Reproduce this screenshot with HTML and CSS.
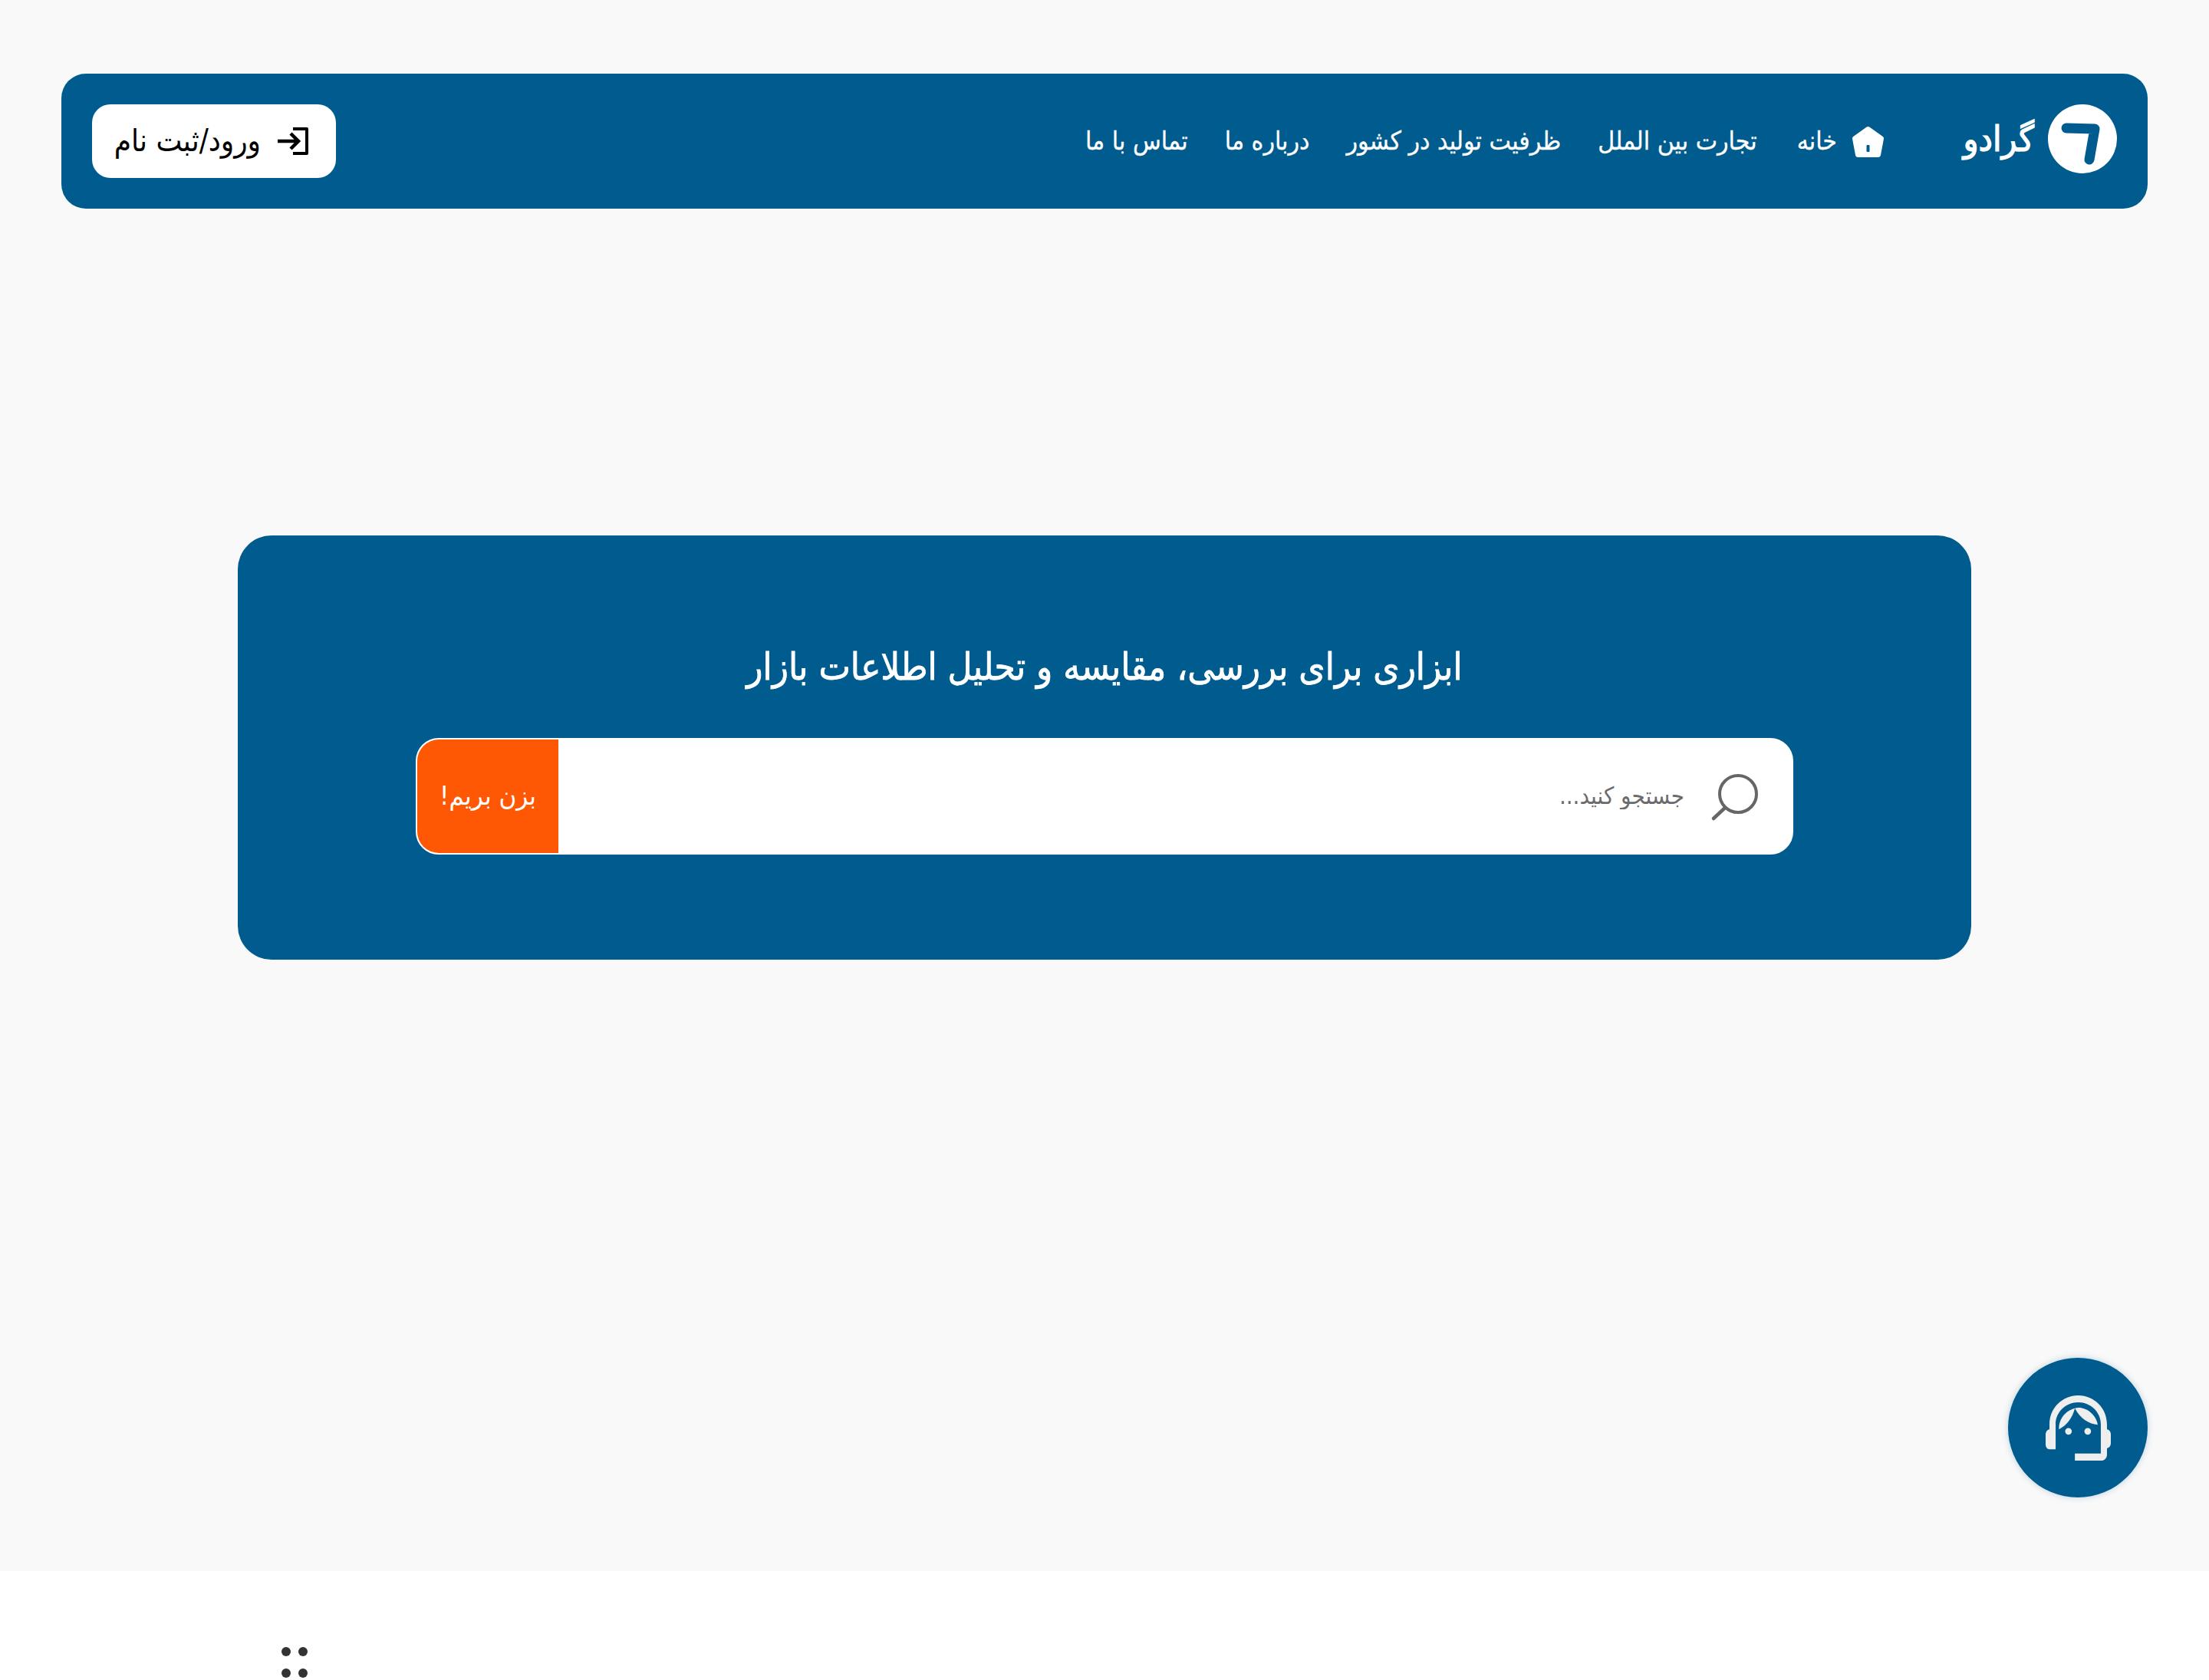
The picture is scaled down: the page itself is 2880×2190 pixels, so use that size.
FILE: index.html
```html
<!DOCTYPE html>
<html lang="fa" dir="rtl">
<head>
    <meta charset="UTF-8">
    <meta name="viewport" content="width=device-width, initial-scale=1.0">
    <title>گرادو</title>
    <link rel="stylesheet" href="styles.css">
</head>
<body>
    <main class="page">
        <header class="navbar">
            <a href="#" class="brand">
                <svg class="brand-mark" viewBox="0 0 90 90">
                    <circle cx="45" cy="45" r="45" fill="#fff"/>
                    <path d="M24 31 L61 32 L54 72" fill="none" stroke="#005b8e" stroke-width="13" stroke-linecap="round" stroke-linejoin="round"/>
                </svg>
                <span class="brand-name">گرادو</span>
            </a>
            <nav class="nav-links">
                <a href="#" class="nav-link nav-home">
                    <svg class="home-icon" viewBox="0 0 41 41">
                        <path d="M20.5 4 L38 16.5 L34 38 L7 38 L3 16.5 Z" fill="#fff" stroke="#fff" stroke-width="6" stroke-linejoin="round"/>
                        <rect x="18.5" y="25" width="4" height="9" rx="1" fill="#005b8e"/>
                    </svg>
                    <span class="nav-text">خانه</span>
                </a>
                <a href="#" class="nav-link"><span class="nav-text">تجارت بین الملل</span></a>
                <a href="#" class="nav-link"><span class="nav-text">ظرفیت تولید در کشور</span></a>
                <a href="#" class="nav-link"><span class="nav-text">درباره ما</span></a>
                <a href="#" class="nav-link"><span class="nav-text">تماس با ما</span></a>
            </nav>
            <a href="#" class="login-btn">
                <svg class="login-icon" viewBox="0 0 40 36">
                    <path d="M20 2 H38 V34 H20" fill="none" stroke="#000" stroke-width="4" stroke-linejoin="round"/>
                    <path d="M0 18 H27 M17 8 L27 18 L17 28" fill="none" stroke="#000" stroke-width="4.5"/>
                </svg>
                <span class="login-text">ورود/ثبت نام</span>
            </a>
        </header>

        <section class="hero">
            <h1 class="hero-title">ابزاری برای بررسی، مقایسه و تحلیل اطلاعات بازار</h1>
            <form class="search-box">
                <svg class="search-icon" viewBox="0 0 64 64">
                    <circle cx="38" cy="26" r="24" fill="none" stroke="#666" stroke-width="4"/>
                    <path d="M21 44 L6 58" fill="none" stroke="#666" stroke-width="4.5" stroke-linecap="round"/>
                </svg>
                <input class="search-input" type="text" placeholder="جستجو کنید...">
                <button class="search-btn" type="submit">بزن بریم!</button>
            </form>
        </section>

        <a href="#" class="support-btn">
            <svg class="support-icon" viewBox="0 0 254 254" fill="#eee">
                <path d="M15 210 V112 C15 50 65 0 127 0 C189 0 239 50 239 112 V230 C239 244 230 254 216 254 H114 V226 H215 V112 C215 65 175 27 127 27 C79 27 39 65 39 112 V210 Z"/>
                <path d="M15 132 C6 134 0 142 0 152 V190 C0 202 6 210 15 210 Z"/>
                <path d="M239 132 C248 134 254 142 254 152 V186 C254 196 248 204 239 206 Z"/>
                <path d="M52 132 C50 95 75 60 114 50 C105 85 85 115 52 132 Z"/>
                <path d="M114 50 C150 40 195 70 203 114 C165 110 135 90 114 50 Z"/>
                <circle cx="89" cy="140" r="13"/>
                <circle cx="164" cy="140" r="13"/>
            </svg>
        </a>
    </main>

    <footer class="footer">
        <div class="dots">
            <span class="dot"></span>
            <span class="dot"></span>
            <span class="dot"></span>
            <span class="dot"></span>
        </div>
    </footer>
</body>
</html>
```

FILE: styles.css
```css
html, body {
    height: 100%;
}

html {
    overflow: hidden;
}

body {
    font-family: "DejaVu Sans Condensed", "DejaVu Sans", sans-serif;
    margin: 0;
    padding: 0;
    background: #fff;
    overflow: hidden;
}

a {
    text-decoration: none;
    color: inherit;
}

.page {
    position: relative;
    height: 2048px;
    box-sizing: border-box;
    padding: 96px 80px 0;
    background: #f9f9f9;
}

.navbar {
    display: flex;
    align-items: center;
    height: 176px;
    box-sizing: border-box;
    padding: 0 40px;
    background: #005b8e;
    border-radius: 32px;
    color: #fff;
}

.brand {
    display: flex;
    align-items: center;
    gap: 18px;
    width: 203px;
    margin-left: 101px;
}

.brand-mark {
    width: 90px;
    height: 90px;
    flex: none;
    margin-top: -6px;
}

.brand-name {
    font-size: 46px;
    white-space: nowrap;
    -webkit-text-stroke: 1.2px #fff;
    padding-bottom: 6px;
}

.nav-links {
    display: flex;
    align-items: center;
    gap: 48px;
    font-size: 33.5px;
}

.nav-link {
    display: flex;
    align-items: center;
}

.nav-text {
    padding-bottom: 2px;
    -webkit-text-stroke: 0.3px #fff;
}

.nav-home {
    gap: 20px;
    margin-left: 4px;
}

.home-icon {
    width: 41px;
    height: 41px;
}

.login-btn {
    display: flex;
    align-items: center;
    gap: 22px;
    margin-right: auto;
    width: 318px;
    height: 96px;
    box-sizing: border-box;
    padding: 0 36px 0 0;
    background: #fff;
    border-radius: 24px;
    color: #000;
    font-size: 40px;
    white-space: nowrap;
}

.login-icon {
    width: 40px;
    height: 36px;
    flex: none;
}

.login-text {
    padding-bottom: 2px;
}

.hero {
    width: 2260px;
    height: 553px;
    box-sizing: border-box;
    margin: 426px auto 0;
    padding-top: 136px;
    background: #005b8e;
    border-radius: 44px;
    color: #fff;
}

.hero-title {
    margin: 0 0 56px;
    font-size: 48.8px;
    font-weight: normal;
    line-height: 72px;
    text-align: center;
    -webkit-text-stroke: 0.8px #fff;
}

.search-box {
    display: flex;
    align-items: center;
    width: 1796px;
    height: 152px;
    box-sizing: border-box;
    margin: 0 auto;
    padding-right: 44px;
    background: #fff;
    border: 2px solid #fff;
    border-radius: 30px;
    overflow: hidden;
}

.search-icon {
    width: 64px;
    height: 64px;
    flex: none;
    margin-top: 6px;
}

.search-input {
    flex: 1;
    min-width: 0;
    margin-right: 30px;
    padding-bottom: 4px;
    border: none;
    outline: none;
    background: none;
    font-family: inherit;
    font-size: 31px;
    color: #666;
}

.search-input::placeholder {
    color: #6b6b6b;
}

.search-btn {
    width: 184px;
    height: 100%;
    flex: none;
    padding: 0 0 3px;
    border: none;
    background: #ff5805;
    color: #fff;
    font-family: inherit;
    font-size: 34.5px;
}

.support-btn {
    position: absolute;
    left: 2618px;
    top: 1770px;
    display: flex;
    align-items: center;
    justify-content: center;
    width: 182px;
    height: 182px;
    border-radius: 50%;
    background: #005b8e;
    box-shadow: 0 0 8px rgba(0, 91, 142, 0.25);
}

.support-icon {
    width: 85px;
    height: 85px;
}

.footer {
    display: flex;
    justify-content: flex-end;
    height: 142px;
    padding-left: 367px;
}

.dots {
    display: grid;
    grid-template-columns: 12px 12px;
    gap: 13px 10px;
    padding-top: 99px;
}

.dot {
    width: 12px;
    height: 12px;
    border-radius: 50%;
    background: #333;
}
```
